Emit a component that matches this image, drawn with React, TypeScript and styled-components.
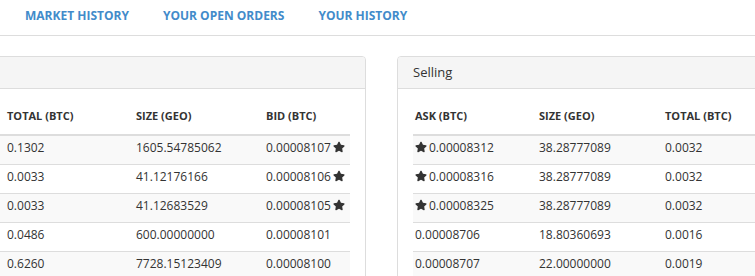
import React from 'react';
import styled, { createGlobalStyle } from 'styled-components';
import { FaStar } from 'react-icons/fa';

const GlobalStyle = createGlobalStyle`
  html, body {
    margin: 0;
    padding: 0;
    background: #fff;
    overflow: hidden;
  }
  body {
    font-family: 'Open Sans', 'Liberation Sans', sans-serif;
    color: #333;
    -webkit-font-smoothing: antialiased;
  }
`;

type Order = { price: string; size: string; total: string; mine?: boolean };

const bids: Order[] = [
  { total: '0.1302', size: '1605.54785062', price: '0.00008107', mine: true },
  { total: '0.0033', size: '41.12176166', price: '0.00008106', mine: true },
  { total: '0.0033', size: '41.12683529', price: '0.00008105', mine: true },
  { total: '0.0486', size: '600.00000000', price: '0.00008101' },
  { total: '0.6260', size: '7728.15123409', price: '0.00008100' },
  { total: '0.0081', size: '100.00000000', price: '0.00008099' },
];

const asks: Order[] = [
  { price: '0.00008312', size: '38.28777089', total: '0.0032', mine: true },
  { price: '0.00008316', size: '38.28777089', total: '0.0032', mine: true },
  { price: '0.00008325', size: '38.28777089', total: '0.0032', mine: true },
  { price: '0.00008706', size: '18.80360693', total: '0.0016' },
  { price: '0.00008707', size: '22.00000000', total: '0.0019' },
  { price: '0.00008750', size: '40.00000000', total: '0.0035' },
];

const bidSums = ['0.1302', '0.1335', '0.1368', '0.1854', '0.8114', '0.8195'];
const askSums = ['0.0032', '0.0064', '0.0096', '0.0112', '0.0131', '0.0166'];

export default function App() {
  return (
    <Page>
      <GlobalStyle />
      <Tabs>
        <TabLink>MARKET HISTORY</TabLink>
        <TabLink>YOUR OPEN ORDERS</TabLink>
        <TabLink>YOUR HISTORY</TabLink>
      </Tabs>
      <Books>
        <Panel>
          <PanelHeading>Buying</PanelHeading>
          <PanelBody>
            <BookTable>
              <colgroup>
                <col style={{ width: 180 }} />
                <col style={{ width: 129 }} />
                <col style={{ width: 130 }} />
                <col style={{ width: 86 }} />
              </colgroup>
              <thead>
                <tr>
                  <Th>SUM (BTC)</Th>
                  <Th>TOTAL (BTC)</Th>
                  <Th>SIZE (GEO)</Th>
                  <Th>BID (BTC)</Th>
                </tr>
              </thead>
              <tbody>
                {bids.map((o, i) => (
                  <Row key={o.price} $striped={i % 2 === 0}>
                    <Td>{bidSums[i]}</Td>
                    <Td>{o.total}</Td>
                    <Td>{o.size}</Td>
                    <Td>
                      {o.price}
                      {o.mine && (
                        <Mine $after>
                          <FaStar />
                        </Mine>
                      )}
                    </Td>
                  </Row>
                ))}
              </tbody>
            </BookTable>
          </PanelBody>
        </Panel>
        <Panel>
          <PanelHeading>Selling</PanelHeading>
          <PanelBody>
            <BookTable>
              <colgroup>
                <col style={{ width: 124 }} />
                <col style={{ width: 126 }} />
                <col style={{ width: 130 }} />
                <col style={{ width: 145 }} />
              </colgroup>
              <thead>
                <tr>
                  <Th>ASK (BTC)</Th>
                  <Th>SIZE (GEO)</Th>
                  <Th>TOTAL (BTC)</Th>
                  <Th>SUM (BTC)</Th>
                </tr>
              </thead>
              <tbody>
                {asks.map((o, i) => (
                  <Row key={o.price} $striped={i % 2 === 0}>
                    <Td>
                      {o.mine && (
                        <Mine>
                          <FaStar />
                        </Mine>
                      )}
                      {o.price}
                    </Td>
                    <Td>{o.size}</Td>
                    <Td>{o.total}</Td>
                    <Td>{askSums[i]}</Td>
                  </Row>
                ))}
              </tbody>
            </BookTable>
          </PanelBody>
        </Panel>
      </Books>
    </Page>
  );
}

const Page = styled.div`
  width: 755px;
  height: 276px;
  overflow: hidden;
`;

const Tabs = styled.nav`
  display: flex;
  padding-left: 8px;
  border-bottom: 1px solid #ddd;
`;

const TabLink = styled.a`
  display: block;
  padding: 7px 17px 10px;
  line-height: 18px;
  font-size: 12px;
  font-weight: 700;
  color: #428bca;
  cursor: pointer;
  white-space: nowrap;
`;

const Books = styled.div`
  display: flex;
  gap: 31px;
  margin: 20px 0 0 -191px;
`;

const Panel = styled.section`
  flex: 0 0 555px;
  border: 1px solid #ddd;
  border-radius: 4px;
  background: #fff;
`;

const PanelHeading = styled.div`
  height: 32px;
  box-sizing: border-box;
  padding: 6px 15px 0;
  line-height: 18px;
  font-size: 13px;
  background: #f5f5f5;
  border-bottom: 1px solid #ddd;
  border-radius: 3px 3px 0 0;
`;

const PanelBody = styled.div`
  padding: 15px 14px 15px 15px;
`;

const BookTable = styled.table`
  width: 525px;
  table-layout: fixed;
  border-collapse: separate;
  border-spacing: 0;
  font-size: 12px;
`;

const Th = styled.th`
  text-align: left;
  font-size: 11px;
  font-weight: 700;
  padding: 3px 2px 9px;
  line-height: 18px;
  border-bottom: 1px solid #ddd;
  white-space: nowrap;
`;

const Row = styled.tr<{ $striped?: boolean }>`
  background: ${(p) => (p.$striped ? '#f9f9f9' : '#fff')};
`;

const Td = styled.td`
  box-sizing: border-box;
  height: 29px;
  padding: 3px 2px 0;
  vertical-align: top;
  line-height: 18px;
  border-top: 1px solid #ddd;
  white-space: nowrap;
`;

const Mine = styled.span<{ $after?: boolean }>`
  display: inline-block;
  vertical-align: -1px;
  margin: ${(p) => (p.$after ? '0 0 0 2px' : '0 2px 0 0')};
  color: #333;
  svg {
    width: 12px;
    height: 12px;
    display: block;
  }
`;
